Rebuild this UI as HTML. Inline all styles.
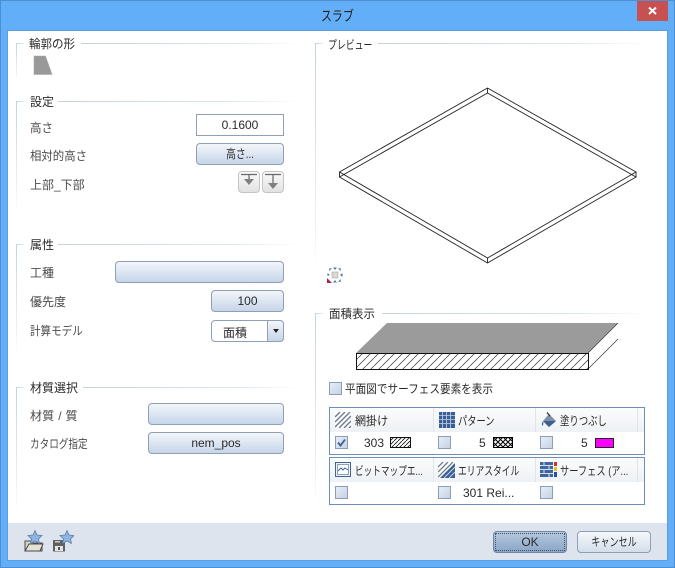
<!DOCTYPE html>
<html><head><meta charset="utf-8">
<style>
html,body{margin:0;padding:0}
body{width:675px;height:568px;overflow:hidden;position:relative;background:#63aef8;font-family:"Liberation Sans","Noto Sans CJK JP",sans-serif;font-size:12px;color:#3c3c3c}
div,svg{position:absolute}
.t{white-space:nowrap;line-height:16px;height:16px;transform-origin:left center}
.l{color:#4a4a4a}
.h{color:#2a2a2a}
.b{box-sizing:border-box;border:1px solid #8f9fb6;border-radius:4px;background:linear-gradient(#f3f6fa,#c6d5e9);text-align:center;color:#2a2a2a;line-height:20px;height:22px}
.b span{display:inline-block}
.c{box-sizing:border-box;width:13px;height:13px;border:1px solid #8c9db4;background:linear-gradient(135deg,#e6edf6,#c5d3e6)}
.hl{height:1px;background:linear-gradient(90deg,#c3d2e2,#dbe5ee 70%,#fff)}
.vl{width:1px;background:linear-gradient(#c3d2e2,#eef2f6 80%,#fff)}
.th{background:linear-gradient(#fbfcfd,#eef1f5);height:24px}
.sep{width:1px;height:24px;background:#dfe4ea}
</style></head>
<body>
<div style="left:0;top:0;width:675px;height:1px;background:#4d8fd0"></div>
<div style="left:0;top:0;width:1px;height:568px;background:#4d8fd0"></div>
<div style="left:674px;top:0;width:1px;height:568px;background:#4d8fd0"></div>
<div style="left:0;top:567px;width:675px;height:1px;background:#4d8fd0"></div>
<div style="left:7px;top:30px;width:661px;height:531px;background:#5a9fe0"></div>
<div style="left:8px;top:31px;width:659px;height:492px;background:#fff"></div>
<div style="left:8px;top:523px;width:659px;height:37px;background:#dde4ee"></div>
<div class="t" style="left:321px;top:8px;font-size:14px;color:#222;transform:scaleX(.78)">スラブ</div>
<div style="left:637px;top:1px;width:31px;height:20px;background:#c75050"></div>
<svg style="left:637px;top:1px" width="31" height="20"><path d="M12 6.500 L19 13 M19 6.500 L12 13" stroke="#fff" stroke-width="2"/></svg>

<!-- group frames -->
<div class="hl" style="left:16px;top:43px;width:9px"></div><div class="hl" style="left:81px;top:43px;width:219px"></div><div class="vl" style="left:16px;top:43px;height:38px"></div>
<div class="t h" style="left:29px;top:36px;transform:scaleX(.96)">輪郭の形</div>
<svg style="left:33px;top:55px" width="20" height="21"><path d="M1 1 H12.500 L19 19.500 H1 Z" fill="#999" stroke="#aaa" stroke-width=".6"/></svg>

<div class="hl" style="left:16px;top:101px;width:9px"></div><div class="hl" style="left:58px;top:101px;width:242px"></div><div class="vl" style="left:16px;top:101px;height:110px"></div>
<div class="t h" style="left:30px;top:94px">設定</div>
<div class="t l" style="left:30px;top:120px;transform:scaleX(.96)">高さ</div>
<div style="left:196px;top:114px;width:88px;height:22px;box-sizing:border-box;border:1px solid #8f9fb6;background:#fff;text-align:center;line-height:20px;color:#2a2a2a">0.1600</div>
<div class="t l" style="left:30px;top:148px;transform:scaleX(.95)">相対的高さ</div>
<div class="b" style="left:196px;top:143px;width:88px"><span style="transform:scaleX(.82)">高さ...</span></div>
<div class="t l" style="left:30px;top:177px">上部_下部</div>
<div style="left:238px;top:171px;width:22px;height:22px;box-sizing:border-box;border:1px solid #c4c4c4;border-radius:4px;background:linear-gradient(#fafafa,#e2e2e2)"></div>
<div style="left:262px;top:171px;width:22px;height:22px;box-sizing:border-box;border:1px solid #c4c4c4;border-radius:4px;background:linear-gradient(#fafafa,#e2e2e2)"></div>
<svg style="left:238px;top:171px" width="46" height="22"><path d="M3 3.500 H19 M11 4 V8 M27 3.500 H43 M35 4 V12" stroke="#666" stroke-width="1.200" fill="none"/><path d="M6 8 H16 L11 14 Z M30 12 H40 L35 18 Z" fill="#808080"/></svg>

<div class="hl" style="left:16px;top:244px;width:9px"></div><div class="hl" style="left:58px;top:244px;width:242px"></div><div class="vl" style="left:16px;top:244px;height:110px"></div>
<div class="t h" style="left:30px;top:237px">属性</div>
<div class="t l" style="left:30px;top:265px">工種</div>
<div class="b" style="left:115px;top:261px;width:169px"></div>
<div class="t l" style="left:30px;top:294px">優先度</div>
<div class="b" style="left:211px;top:290px;width:73px">100</div>
<div class="t l" style="left:30px;top:323px;transform:scaleX(.88)">計算モデル</div>
<div style="left:211px;top:320px;width:73px;height:22px;box-sizing:border-box;border:1px solid #8f9fb6;border-radius:4px;background:#fff"></div>
<div class="t h" style="left:223px;top:325px">面積</div>
<div style="left:267px;top:320px;width:17px;height:22px;box-sizing:border-box;border:1px solid #8f9fb6;border-radius:0 4px 4px 0;background:linear-gradient(#f3f6fa,#c6d5e9)"></div>
<svg style="left:272px;top:329px" width="8" height="5"><path d="M1 0 H7 L4 4 Z" fill="#222"/></svg>

<div class="hl" style="left:16px;top:387px;width:9px"></div><div class="hl" style="left:83px;top:387px;width:217px"></div><div class="vl" style="left:16px;top:387px;height:125px"></div>
<div class="t h" style="left:30px;top:380px">材質選択</div>
<div class="t l" style="left:30px;top:408px;letter-spacing:.3px">材質 / 質</div>
<div class="b" style="left:148px;top:403px;width:136px"></div>
<div class="t l" style="left:30px;top:436px;transform:scaleX(.8)">カタログ指定</div>
<div class="b" style="left:148px;top:432px;width:136px">nem_pos</div>

<!-- preview -->
<div class="hl" style="left:315px;top:43px;width:9px"></div><div class="hl" style="left:378px;top:43px;width:272px"></div><div class="vl" style="left:315px;top:43px;height:230px"></div>
<div class="t h" style="left:328px;top:37px;transform:scaleX(.74)">プレビュー</div>
<svg style="left:320px;top:80px" width="330" height="210" fill="none" stroke="#222" stroke-width=".9">
<path d="M167.500 8 L316 92 L167.500 178 L19.500 92 Z"/>
<path d="M167.500 13 L316 97 L167.500 183 L19.500 97 Z"/>
<path d="M167.500 8 V13 M316 92 V97 M167.500 178 V183 M19.500 92 V97"/>
</svg>
<svg style="left:325px;top:265px" width="20" height="20">
<path d="M8 2.500 H12 L10 5 Z M8 17.500 H12 L10 15 Z M17.500 8 V12 L15 10 Z M4 3.500 L7 3 L4.500 6 Z M16 3.500 L13 3 L15.500 6 Z M16 16.500 L13 17 L15.500 14 Z M2.500 8 V11 L5 10 Z" fill="#5d7898"/>
<path d="M2 13 L2 18 L7 18 Z" fill="#a32a3a"/>
<rect x="7" y="7" width="6" height="6" fill="#dcd8d0" stroke="#aaa" stroke-width=".6"/>
</svg>

<!-- area -->
<div class="hl" style="left:315px;top:313px;width:9px"></div><div class="hl" style="left:382px;top:313px;width:268px"></div><div class="vl" style="left:315px;top:313px;height:199px"></div>
<div class="t h" style="left:329px;top:306px;transform:scaleX(.96)">面積表示</div>
<svg style="left:350px;top:318px" width="275" height="58">
<defs><pattern id="hp" width="8" height="8" patternUnits="userSpaceOnUse"><path d="M-1 9 L9 -1" stroke="#333" stroke-width=".7"/></pattern></defs>
<path d="M37 5 H268 L238 35 H6 Z" fill="#9b9b9b"/>
<path d="M268 5 L238 35 M268 21 L238 51" stroke="#333" stroke-width=".7" fill="none"/>
<rect x="6.500" y="35.500" width="232" height="16" fill="url(#hp)" stroke="#111" stroke-width="1"/>
</svg>
<div class="c" style="left:329px;top:382px"></div>
<div class="t h" style="left:345px;top:381px;transform:scaleX(.885)">平面図でサーフェス要素を表示</div>

<!-- table 1 -->
<div style="left:329px;top:407px;width:316px;height:48px;box-sizing:border-box;border:1px solid #6f8fb8;background:#fff"></div>
<div class="th" style="left:330px;top:408px;width:314px"></div>
<div class="sep" style="left:433px;top:408px"></div><div class="sep" style="left:535px;top:408px"></div><div class="sep" style="left:637px;top:408px"></div>
<svg style="left:335px;top:412px" width="16" height="16"><rect width="16" height="16" fill="#fff"/><path d="M0 5 L5 0 M0 10 L10 0 M0 15 L15 0 M4 16 L16 4 M9 16 L16 9 M14 16 L16 14" stroke="#6c7a92" stroke-width="1.400"/></svg>
<div class="t h" style="left:355px;top:413px;transform:scaleX(.92)">網掛け</div>
<svg style="left:439px;top:412px" width="16" height="16"><rect width="16" height="16" fill="#3a5f96"/><path d="M0 3.500 H16 M0 7.500 H16 M0 11.500 H16 M3.500 0 V16 M7.500 0 V16 M11.500 0 V16" stroke="#c4d2e6" stroke-width=".8"/></svg>
<div class="t h" style="left:458px;top:413px;transform:scaleX(.77)">パターン</div>
<svg style="left:541px;top:412px" width="17" height="16"><path d="M8 2 L15 9 L8 15 L2 9 Z" fill="#7f8fa5"/><path d="M2 9 L8 15 L15 9 Z" fill="#3d5f8e"/><path d="M9 4 L6 0.500" stroke="#444" stroke-width="1.400"/><path d="M2 9 Q0 12 1.500 14 Q3 12 2 9 Z" fill="#3a6ab0"/></svg>
<div class="t h" style="left:560px;top:413px;transform:scaleX(.78)">塗りつぶし</div>
<div class="c" style="left:335px;top:436px"></div>
<svg style="left:335px;top:436px" width="13" height="13"><path d="M3 6.500 L5.500 9.500 L10 3.500" fill="none" stroke="#3f5f8f" stroke-width="1.800"/></svg>
<div class="t h" style="left:364px;top:435px">303</div>
<svg style="left:390px;top:437px" width="21" height="11"><defs><pattern id="p1" width="4" height="4" patternUnits="userSpaceOnUse"><path d="M-1 5 L5 -1" stroke="#111" stroke-width=".8"/></pattern></defs><rect x=".5" y=".5" width="20" height="10" fill="url(#p1)" stroke="#111"/></svg>
<div class="c" style="left:438px;top:436px"></div>
<div class="t h" style="left:479px;top:435px">5</div>
<svg style="left:493px;top:437px" width="20" height="11"><defs><pattern id="p2" width="5" height="5" patternUnits="userSpaceOnUse"><rect width="5" height="5" fill="#fff"/><path d="M0 0 L5 5 M5 0 L0 5" stroke="#000" stroke-width="1"/></pattern></defs><rect x=".5" y=".5" width="19" height="10" fill="url(#p2)" stroke="#000"/></svg>
<div class="c" style="left:540px;top:436px"></div>
<div class="t h" style="left:581px;top:435px">5</div>
<div style="left:595px;top:438px;width:19px;height:10px;box-sizing:border-box;border:1px solid #222;background:#f0f"></div>

<!-- table 2 -->
<div style="left:329px;top:457px;width:316px;height:48px;box-sizing:border-box;border:1px solid #6f8fb8;background:#fff"></div>
<div class="th" style="left:330px;top:458px;width:314px"></div>
<div class="sep" style="left:433px;top:458px"></div><div class="sep" style="left:535px;top:458px"></div><div class="sep" style="left:637px;top:458px"></div>
<svg style="left:335px;top:462px" width="16" height="15"><rect x=".5" y=".5" width="15" height="14" fill="#eef3f9" stroke="#45658f"/><rect x="2.500" y="2.500" width="11" height="10" fill="#fff" stroke="#6f8db0" stroke-width=".8"/><path d="M3 9 L6 6 L8 8 L10 6 L13 8" stroke="#45658f" fill="none"/></svg>
<div class="t h" style="left:355px;top:463px;transform:scaleX(.72)">ビットマップエ...</div>
<svg style="left:438px;top:462px" width="17" height="16"><rect width="17" height="16" fill="#fff"/><path d="M0 5 L5 0 M0 10 L10 0 M0 15 L15 0" stroke="#6c7a92" stroke-width="1.300"/><path d="M17 1 V16 H2 Z" fill="#3a5f96"/><path d="M6 16 L17 5 M11 16 L17 10" stroke="#c4d2e6" stroke-width="1"/></svg>
<div class="t h" style="left:458px;top:463px;transform:scaleX(.73)">エリアスタイル</div>
<svg style="left:540px;top:462px" width="17" height="15"><rect width="13" height="15" fill="#3f66a0"/><path d="M0 3.500 H13 M0 7.500 H13 M0 11.500 H13 M4 0 V3 M9 4 V7 M4 8 V11 M9 12 V15" stroke="#d7e1ee"/><rect x="14" y="0" width="3" height="4" fill="#d03030"/><rect x="14" y="5" width="3" height="4" fill="#e8c020"/><rect x="14" y="10" width="3" height="5" fill="#2050b0"/></svg>
<div class="t h" style="left:560px;top:463px;transform:scaleX(.77)">サーフェス (ア...</div>
<div class="c" style="left:335px;top:486px"></div>
<div class="c" style="left:438px;top:486px"></div>
<div class="t h" style="left:463px;top:485px">301 Rei...</div>
<div class="c" style="left:540px;top:486px"></div>

<!-- bottom -->
<svg style="left:22px;top:530px" width="52" height="24">
<path d="M3 21 L3 11 H9 L11 13 H20 V21 Z" fill="#d8d4c6" stroke="#4a4a4a" stroke-width="1"/>
<path d="M3 21 L7 14 H21 L18 21 Z" fill="#e6e2d6" stroke="#4a4a4a" stroke-width="1"/>
<path d="M13 0.500 L15 5 L20 5.500 L16.500 9 L17.500 13.500 L13 11 L8.500 13.500 L9.500 9 L6 5.500 L11 5 Z" fill="#8fb4e0" stroke="#5a7fae" stroke-width=".8"/>
<rect x="31" y="10" width="12" height="11.500" fill="#5f5f5f"/>
<rect x="33" y="16" width="8" height="5" fill="#e4e4e4"/>
<rect x="36" y="17" width="2" height="3" fill="#555"/>
<rect x="33" y="11" width="5" height="1.500" fill="#ccc"/>
<path d="M45 0.500 L47 5 L52 5.500 L48.500 9 L49.500 13.500 L45 11 L40.500 13.500 L41.500 9 L38 5.500 L43 5 Z" fill="#8fb4e0" stroke="#5a7fae" stroke-width=".8"/>
</svg>
<div class="b" style="left:493px;top:531px;width:74px;border-color:#6f87a5;background:linear-gradient(#b5c8de,#8ba6c6)">OK</div>
<div style="left:495px;top:533px;width:70px;height:18px;box-sizing:border-box;border:1px dotted #44546a"></div>
<div class="b" style="left:577px;top:531px;width:74px;background:linear-gradient(#f6f8fb,#d3deec)"><span style="transform:scaleX(.76)">キャンセル</span></div>
</body></html>
